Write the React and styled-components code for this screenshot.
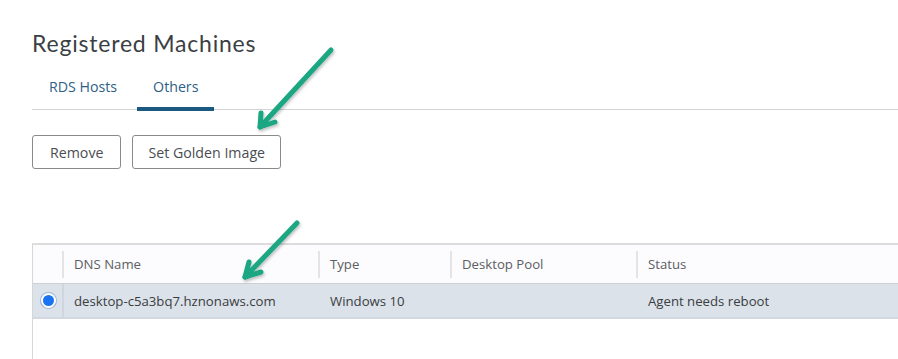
import styled, { createGlobalStyle } from 'styled-components';

const GlobalStyle = createGlobalStyle`
  html, body {
    margin: 0;
    padding: 0;
    background: #ffffff;
    font-family: "Open Sans", "Liberation Sans", sans-serif;
  }
`;

const Page = styled.div`
  position: relative;
  width: 898px;
  height: 359px;
  overflow: hidden;
  padding: 29px 0 0 32px;
  box-sizing: border-box;
`;

const Title = styled.h1`
  margin: 0;
  font-family: "Lato", "Open Sans", sans-serif;
  font-weight: 400;
  font-size: 23px;
  line-height: 28px;
  color: #3b3f44;
  letter-spacing: 0.8px;
`;

const TabBar = styled.div`
  display: flex;
  margin-top: 20px;
  border-bottom: 1px solid #d3d3d3;
  height: 32px;
  padding-left: 2px;
`;

const Tab = styled.div`
  position: relative;
  padding: 0 ${p => (p.$active ? 16 : 15)}px;
  font-size: 14.2px;
  line-height: 20px;
  color: #2d6186;
  margin-right: ${p => (p.$active ? 0 : 5)}px;

  &::after {
    content: '';
    display: ${p => (p.$active ? 'block' : 'none')};
    position: absolute;
    left: 0;
    right: 0;
    bottom: -2px;
    height: 4px;
    background: #1b5a80;
  }
`;

const Toolbar = styled.div`
  display: flex;
  gap: 11px;
  margin-top: 25px;
`;

const Button = styled.button`
  height: 34px;
  padding: 0 ${p => p.$pad}px;
  border: 1px solid #8a8a8a;
  border-radius: 3px;
  background: #fff;
  font-family: "Open Sans", "Liberation Sans", sans-serif;
  font-size: 14.2px;
  color: #494d52;
`;

const Table = styled.div`
  margin-top: 74px;
  border-top: 2px solid #dcdcdc;
  border-left: 1px solid #d6d6d6;
  height: 120px;
`;

const Row = styled.div`
  display: grid;
  grid-template-columns: 29px 256px 132px 186px 1fr;
  height: ${p => (p.$head ? 38 : 33)}px;
  background: ${p => (p.$head ? '#fcfbfd' : '#dce2ea')};
  border-bottom: ${p => (p.$head ? '1px solid #cfcfd4' : '2px solid #d2d8e1')};
`;

const Cell = styled.div`
  display: flex;
  align-items: center;
  padding-left: 10px;
  font-size: 13.2px;
  color: ${p => (p.$head ? '#5b5e62' : '#3a3d40')};
  border-left: 2px solid transparent;
  position: relative;

  &::before {
    content: '';
    position: absolute;
    left: -2px;
    top: ${p => (p.$head ? 6 : 0)}px;
    bottom: ${p => (p.$head ? 5 : 0)}px;
    width: 2px;
    background: ${p => (p.$head ? '#e4e4e6' : p.$divider ? '#d0d6df' : 'transparent')};
  }
`;

const RadioCell = styled.div`
  display: flex;
  align-items: center;
  justify-content: center;
  padding-left: 2px;
`;

const Radio = styled.span`
  width: 11px;
  height: 11px;
  border-radius: 50%;
  background: #1a73f0;
  box-shadow: 0 0 0 2px #ffffff, 0 0 0 3px #9fb3d6;
`;

const ArrowLayer = styled.svg`
  position: absolute;
  left: 0;
  top: 0;
  pointer-events: none;
`;

function Arrow({ x1, y1, x2, y2, wa, wb }) {
  return (
    <g stroke="#1aa682" strokeWidth="5" strokeLinecap="round" strokeLinejoin="round" fill="none" filter="url(#shadow)">
      <line x1={x1} y1={y1} x2={x2} y2={y2} />
      <polyline points={`${wa[0]},${wa[1]} ${x2},${y2} ${wb[0]},${wb[1]}`} />
    </g>
  );
}

export default function App() {
  return (
    <>
      <GlobalStyle />
      <Page>
        <Title>Registered Machines</Title>
        <TabBar>
          <Tab>RDS Hosts</Tab>
          <Tab $active>Others</Tab>
        </TabBar>
        <Toolbar>
          <Button $pad={17}>Remove</Button>
          <Button $pad={15}>Set Golden Image</Button>
        </Toolbar>
        <Table>
          <Row $head>
            <RadioCell />
            <Cell $head>DNS Name</Cell>
            <Cell $head>Type</Cell>
            <Cell $head>Desktop Pool</Cell>
            <Cell $head>Status</Cell>
          </Row>
          <Row>
            <RadioCell>
              <Radio />
            </RadioCell>
            <Cell $divider>desktop-c5a3bq7.hznonaws.com</Cell>
            <Cell>Windows 10</Cell>
            <Cell />
            <Cell>Agent needs reboot</Cell>
          </Row>
        </Table>
        <ArrowLayer width="898" height="359" viewBox="0 0 898 359">
          <defs>
            <filter id="shadow" x="-20%" y="-20%" width="140%" height="140%">
              <feDropShadow dx="1" dy="2" stdDeviation="1.5" floodColor="#000" floodOpacity="0.25" />
            </filter>
          </defs>
          <Arrow x1={331} y1={50} x2={260} y2={127} wa={[261, 113]} wb={[275, 122]} />
          <Arrow x1={297} y1={223} x2={245} y2={277} wa={[249, 262]} wb={[261, 272]} />
        </ArrowLayer>
      </Page>
    </>
  );
}
